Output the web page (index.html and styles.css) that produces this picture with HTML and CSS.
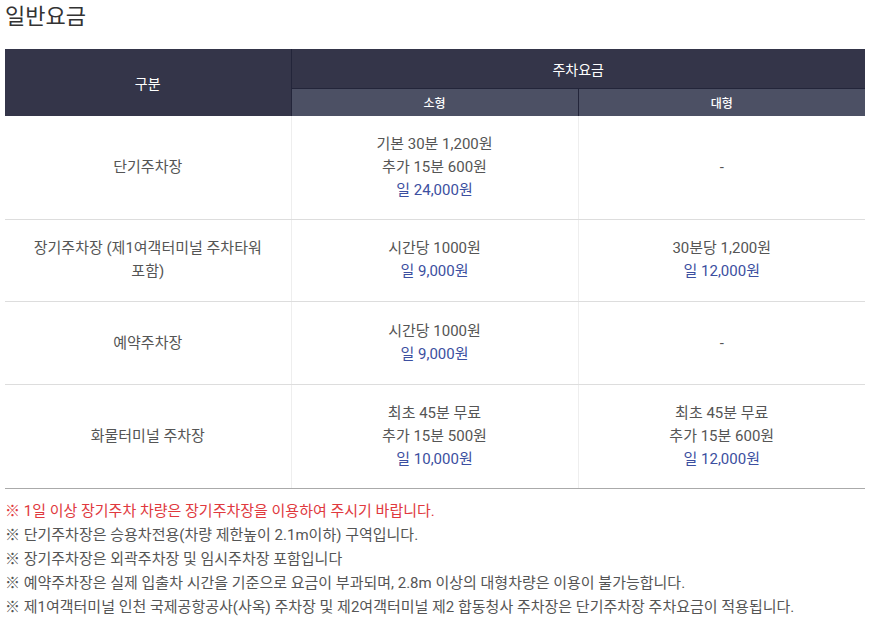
FILE: index.html
```html
<!DOCTYPE html>
<html lang="ko">
<head>
<meta charset="utf-8">
<link rel="stylesheet" href="styles.css">
</head>
<body>
<div class="wrap">
  <h2 class="title">일반요금</h2>
  <table class="fee">
    <colgroup><col class="c1"><col class="c2"><col class="c3"></colgroup>
    <thead>
      <tr><th rowspan="2" class="h-main">구분</th><th colspan="2" class="h-main h-top">주차요금</th></tr>
      <tr><th class="h-sub">소형</th><th class="h-sub">대형</th></tr>
    </thead>
    <tbody>
      <tr class="r3"><td>단기주차장</td><td>기본 30분 1,200원<br>추가 15분 600원<br><span class="day">일 24,000원</span></td><td>-</td></tr>
      <tr class="r2"><td>장기주차장 (제1여객터미널 주차타워<br>포함)</td><td>시간당 1000원<br><span class="day">일 9,000원</span></td><td>30분당 1,200원<br><span class="day">일 12,000원</span></td></tr>
      <tr class="r2 tall"><td>예약주차장</td><td>시간당 1000원<br><span class="day">일 9,000원</span></td><td>-</td></tr>
      <tr class="r3 last"><td>화물터미널 주차장</td><td>최초 45분 무료<br>추가 15분 500원<br><span class="day">일 10,000원</span></td><td>최초 45분 무료<br>추가 15분 600원<br><span class="day">일 12,000원</span></td></tr>
    </tbody>
  </table>
  <ul class="notes">
    <li class="red">※ 1일 이상 장기주차 차량은 장기주차장을 이용하여 주시기 바랍니다.</li>
    <li>※ 단기주차장은 승용차전용(차량 제한높이 2.1m이하) 구역입니다.</li>
    <li>※ 장기주차장은 외곽주차장 및 임시주차장 포함입니다</li>
    <li>※ 예약주차장은 실제 입출차 시간을 기준으로 요금이 부과되며, 2.8m 이상의 대형차량은 이용이 불가능합니다.</li>
    <li>※ 제1여객터미널 인천 국제공항공사(사옥) 주차장 및 제2여객터미널 제2 합동청사 주차장은 단기주차장 주차요금이 적용됩니다.</li>
  </ul>
</div>
</body>
</html>
```

FILE: styles.css
```css
html, body {
  margin: 0;
  padding: 0;
  background: #fff;
}
body {
  font-family: Roboto, "Noto Sans CJK KR", sans-serif;
  color: #555;
}
.wrap {
  padding: 0 6px 0 5px;
}
.title {
  margin: 0;
  font-size: 22px;
  font-weight: 400;
  line-height: 34px;
  color: #333;
  height: 49px;
}
.fee {
  width: 860px;
  border-collapse: collapse;
  table-layout: fixed;
  font-size: 15px;
}
.c1 { width: 286px; }
.c2 { width: 287px; }
.c3 { width: 287px; }
.fee th {
  color: #fff;
  font-weight: 400;
  padding: 0;
}
.h-main {
  background: #343549;
  font-size: 14px;
  border-right: 1px solid #23253a;
}
.h-main:last-child { border-right: 0; }
.h-top {
  height: 39px;
  border-bottom: 1px solid #23253a;
}
.fee th.h-sub {
  background: #4c5064;
  height: 27px;
  font-size: 12px;
  font-weight: 500;
}
.h-sub + .h-sub { border-left: 1px solid #23253a; }
.fee td {
  text-align: center;
  padding: 17px 10px;
  line-height: 23px;
  border-bottom: 1px solid #ddd;
  border-left: 1px solid #eee;
}
.fee td:first-child { border-left: 0; }
.fee tr.r2 td { padding: 17px 10px 18px; }
.fee tr.tall td { padding: 18px 10px 18px; }
.fee tr.last td { padding: 17px 10px 17px; border-bottom: 1px solid #aaa; }
.day { color: #3c4fa0; }
.notes {
  list-style: none;
  margin: 10px 0 0;
  padding: 0;
  font-size: 15px;
  line-height: 24px;
  color: #555;
}
.notes .red { color: #e0393e; }
```
